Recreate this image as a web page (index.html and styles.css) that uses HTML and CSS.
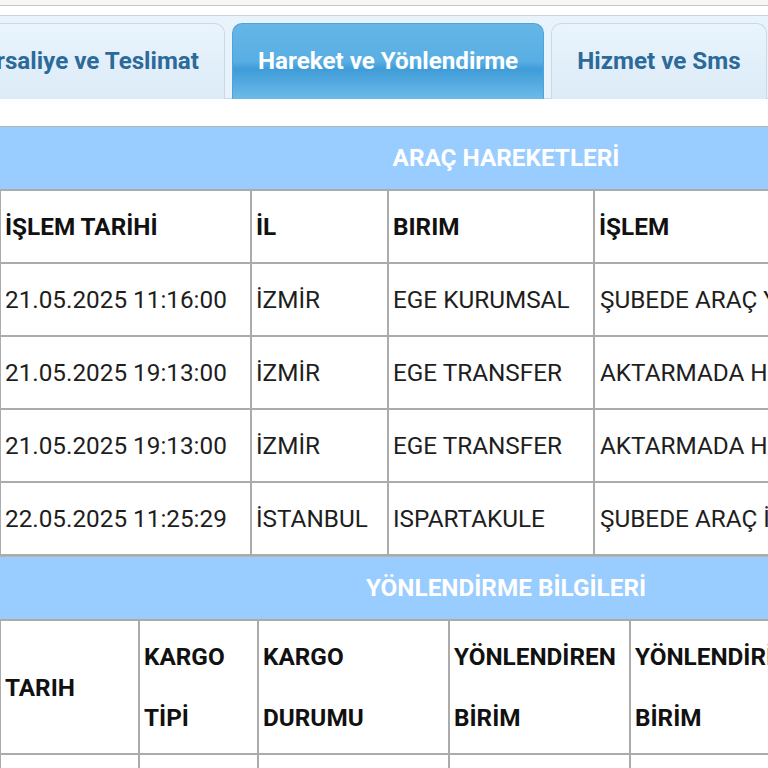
FILE: index.html
```html
<!DOCTYPE html>
<html lang="tr">
<head>
  <meta charset="UTF-8">
  <title>Kargo Takip</title>
  <meta name="viewport" content="width=device-width, initial-scale=1.0">
  <link rel="stylesheet" href="styles.css">
</head>
<body>

  <!-- TAB PANEL -->
  <div class="panel">
    <ul class="tabs">
      <li><a href="#">İrsaliye ve Teslimat</a></li>
      <li class="active"><a href="#">Hareket ve Yönlendirme</a></li>
      <li><a href="#">Hizmet ve Sms</a></li>
    </ul>

    <div class="tab-content">
      <!-- ARAC HAREKETLERI -->
      <table class="grid">
        <colgroup>
          <col style="width: 251px">
          <col style="width: 137px">
          <col style="width: 206px">
          <col>
        </colgroup>
        <tr>
          <th class="title" colspan="4">ARAÇ HAREKETLERİ</th>
        </tr>
        <tr>
          <th>İŞLEM TARİHİ</th>
          <th>İL</th>
          <th>BIRIM</th>
          <th>İŞLEM</th>
        </tr>
        <tr>
          <td>21.05.2025 11:16:00</td>
          <td>İZMİR</td>
          <td>EGE KURUMSAL</td>
          <td>ŞUBEDE ARAÇ YÜKLENDİ</td>
        </tr>
        <tr>
          <td>21.05.2025 19:13:00</td>
          <td>İZMİR</td>
          <td>EGE TRANSFER</td>
          <td>AKTARMADA HAREKET ETTİ</td>
        </tr>
        <tr>
          <td>21.05.2025 19:13:00</td>
          <td>İZMİR</td>
          <td>EGE TRANSFER</td>
          <td>AKTARMADA HAREKET ETTİ</td>
        </tr>
        <tr>
          <td>22.05.2025 11:25:29</td>
          <td>İSTANBUL</td>
          <td>ISPARTAKULE</td>
          <td>ŞUBEDE ARAÇ İNDİRİLDİ</td>
        </tr>
      </table>

      <!-- YONLENDIRME BILGILERI -->
      <table class="grid">
        <colgroup>
          <col style="width: 139px">
          <col style="width: 119px">
          <col style="width: 191px">
          <col style="width: 181px">
          <col style="width: 230px">
          <col>
        </colgroup>
        <tr>
          <th class="title" colspan="6">YÖNLENDİRME BİLGİLERİ</th>
        </tr>
        <tr>
          <th>TARIH</th>
          <th>KARGO TİPİ</th>
          <th>KARGO DURUMU</th>
          <th>YÖNLENDİREN BİRİM</th>
          <th>YÖNLENDİRİLEN BİRİM</th>
          <th>AÇIKLAMA</th>
        </tr>
        <tr>
          <td>22.05.2025</td>
          <td>KOLİ</td>
          <td>TESLİM EDİLDİ</td>
          <td>ISPARTAKULE</td>
          <td>BAHÇEŞEHİR</td>
          <td>-</td>
        </tr>
      </table>
    </div>
  </div>

</body>
</html>
```

FILE: styles.css
```css
body {
  font-family: Roboto, "Liberation Sans", sans-serif;
  background: #f6f6f6;
  margin: 0;
  padding: 0;
  overflow: hidden;
}

/* --- TABS --- */
.panel {
  margin-top: 5px;
  border-top: 1px solid #c8c8c8;
  background: #fff;
  padding-top: 9px;
}

.tabs {
  list-style: none;
  margin: 0 0 0 -37px;
  padding: 7px 0 0;
  display: flex;
  gap: 7px;
  background: #e8f3fc;
  border-top: 1px solid #c9d3dc;
  border-bottom: 1px solid #c5dbec;
}

.tabs li {
  flex-shrink: 0;
  margin-bottom: -1px;
}

.tabs a {
  display: block;
  height: 75px;
  line-height: 75px;
  padding: 0 25px;
  font-size: 24.2px;
  font-weight: bold;
  white-space: nowrap;
  color: #2b6a99;
  text-decoration: none;
  border: 1px solid #c5dbec;
  border-bottom: none;
  border-radius: 10px 10px 0 0;
  background: linear-gradient(#e9f4fd, #dcebf7);
}

.tabs li.active a {
  color: #fff;
  border-color: #4fa3da;
  background: linear-gradient(#66b6e7 0%, #58aee3 50%, #3f9cd8 60%, #6cbbe8 100%);
}

/* --- TABLES --- */
.tab-content {
  padding-top: 27px;
  background: #fff;
}

.grid {
  width: 1014px;
  margin-left: -1px;
  border-collapse: collapse;
  table-layout: fixed;
  font-size: 24.3px;
  color: #1e1e1e;
}

.grid th,
.grid td {
  border: 2px solid #ababab;
  padding: 5px 6px 5px 4px;
  line-height: 61px;
  text-align: left;
  vertical-align: middle;
}

.grid td:nth-child(4) {
  padding-left: 5px;
}

.grid th {
  color: #111;
}

.grid th.title {
  background: #99ccff;
  color: #fff;
  text-align: center;
  padding: 0;
  line-height: 62px;
  border-top: 1px solid #b4b4b4;
  border-left: none;
  border-right: none;
}

.grid td {
  white-space: nowrap;
  overflow: hidden;
}
```
